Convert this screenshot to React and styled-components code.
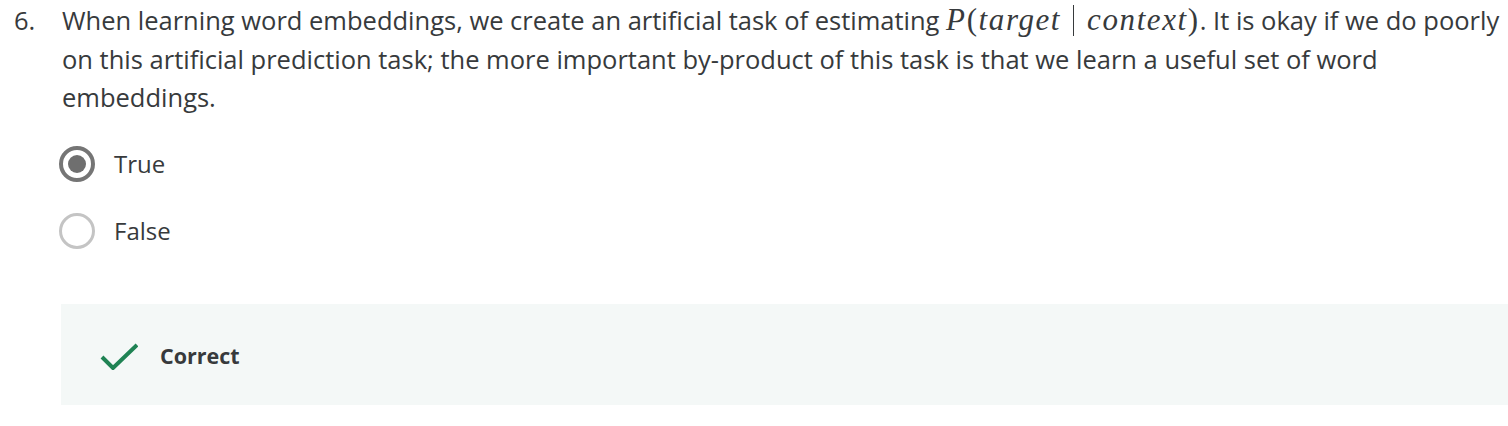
import styled, { createGlobalStyle } from "styled-components";

const GlobalStyle = createGlobalStyle`
  html, body {
    margin: 0;
    padding: 0;
    background: #ffffff;
    overflow: hidden;
  }
  body {
    font-family: "Open Sans", "Noto Sans", sans-serif;
    color: #373a3c;
  }
`;

const Page = styled.div`
  width: 1540px;
  padding: 1px 0 0 14px;
`;

const Question = styled.div`
  display: flex;
  font-size: 25.5px;
  line-height: 38.5px;
`;

const Number = styled.div`
  width: 48px;
  flex: none;
`;

const Prompt = styled.div`
  width: 1462px;
`;

const Math = styled.span`
  font-family: "Liberation Serif", "DejaVu Serif", serif;
  font-size: 31px;
  letter-spacing: 1.6px;
  i {
    font-style: italic;
  }
`;

const Bar = styled.span`
  display: inline-block;
  width: 1px;
  height: 31px;
  background: #373a3c;
  margin: 0 13px 0 12px;
  vertical-align: -6px;
`;

const Options = styled.div`
  display: flex;
  flex-direction: column;
  gap: 29px;
  margin: 28px 0 0 45px;
`;

const Option = styled.label`
  display: flex;
  align-items: center;
  gap: 19px;
  height: 38px;
  font-size: 24px;
`;

const Radio = styled.span`
  box-sizing: border-box;
  width: 36px;
  height: 36px;
  border-radius: 50%;
  border: ${(p) => (p.checked ? "4px solid #757575" : "3px solid #c4c4c4")};
  display: flex;
  align-items: center;
  justify-content: center;
  &::after {
    content: "";
    display: ${(p) => (p.checked ? "block" : "none")};
    width: 18px;
    height: 18px;
    border-radius: 50%;
    background: #6f6f6f;
  }
`;

const Feedback = styled.div`
  box-sizing: border-box;
  display: flex;
  align-items: center;
  gap: 22px;
  margin: 54px 0 0 47px;
  height: 101px;
  padding: 3px 0 0 39px;
  background: #f4f8f7;
`;

const Status = styled.span`
  font-size: 21.5px;
  font-weight: 700;
  color: #373a3c;
`;

function Check() {
  return (
    <svg width="38" height="28" viewBox="0 0 38 28">
      <path d="M2 15 L13 26 L37 3" fill="none" stroke="#1f8354" strokeWidth="4" />
    </svg>
  );
}

export default function App() {
  return (
    <>
      <GlobalStyle />
      <Page>
        <Question>
          <Number>6.</Number>
          <Prompt>
            When learning word embeddings, we create an artificial task of estimating{" "}
            <Math>
              <i>P</i>(<i>target</i>
              <Bar />
              <i>context</i>)
            </Math>
            . It is okay if we do poorly on this artificial prediction task; the more important
            by-product of this task is that we learn a useful set of word embeddings.
          </Prompt>
        </Question>
        <Options>
          <Option>
            <Radio checked />
            True
          </Option>
          <Option>
            <Radio />
            False
          </Option>
        </Options>
        <Feedback>
          <Check />
          <Status>Correct</Status>
        </Feedback>
      </Page>
    </>
  );
}
